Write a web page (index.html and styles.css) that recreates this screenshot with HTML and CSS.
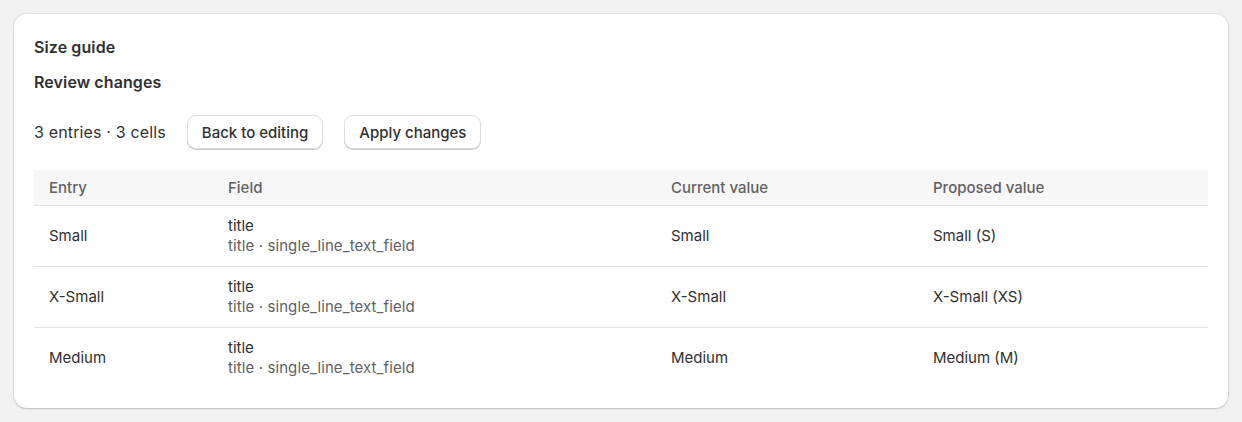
FILE: index.html
```html
<!DOCTYPE html>
<html lang="en">
<head>
    <meta charset="UTF-8">
    <meta name="viewport" content="width=device-width, initial-scale=1.0">
    <title>Size guide - Review changes</title>
    <link rel="stylesheet" href="styles.css">
</head>
<body>
    <div class="card">
        <h2 class="card-title">Size guide</h2>
        <h3 class="section-title">Review changes</h3>

        <div class="toolbar">
            <span class="summary">3 entries · 3 cells</span>
            <button class="btn">Back to editing</button>
            <button class="btn">Apply changes</button>
        </div>

        <table class="review-table">
            <colgroup>
                <col class="col-entry">
                <col class="col-field">
                <col class="col-current">
                <col>
            </colgroup>
            <thead>
                <tr>
                    <th>Entry</th>
                    <th>Field</th>
                    <th>Current value</th>
                    <th>Proposed value</th>
                </tr>
            </thead>
            <tbody>
                <tr>
                    <td>Small</td>
                    <td>
                        <div class="field-name">title</div>
                        <div class="field-meta">title · single_line_text_field</div>
                    </td>
                    <td>Small</td>
                    <td>Small (S)</td>
                </tr>
                <tr>
                    <td>X-Small</td>
                    <td>
                        <div class="field-name">title</div>
                        <div class="field-meta">title · single_line_text_field</div>
                    </td>
                    <td>X-Small</td>
                    <td>X-Small (XS)</td>
                </tr>
                <tr>
                    <td>Medium</td>
                    <td>
                        <div class="field-name">title</div>
                        <div class="field-meta">title · single_line_text_field</div>
                    </td>
                    <td>Medium</td>
                    <td>Medium (M)</td>
                </tr>
            </tbody>
        </table>
    </div>
</body>
</html>
```

FILE: styles.css
```css
body {
    margin: 0;
    padding: 14px;
    background: #f1f1f1;
    font-family: Inter, "Noto Sans", Arial, sans-serif;
    font-size: 15px;
    color: #303030;
}
.card {
    background: #fff;
    border-radius: 13px;
    padding: 20px;
    box-shadow: 0 0 0 1px rgba(0,0,0,0.05), 0 1px 2px rgba(0,0,0,0.18);
}
.card-title,
.section-title {
    margin: 0;
    font-size: 16px;
    font-weight: 600;
    line-height: 26px;
    letter-spacing: 0.1px;
}
.section-title {
    margin-top: 9px;
}
.toolbar {
    display: flex;
    align-items: center;
    gap: 21px;
    margin-top: 20px;
}
.summary {
    font-size: 16px;
    line-height: 20px;
    letter-spacing: 0.15px;
}
.btn {
    font-family: inherit;
    font-size: 15px;
    font-weight: 500;
    color: #303030;
    background: #fff;
    height: 34px;
    padding: 0 14px;
    border: 1px solid #dcdcdc;
    border-radius: 9px;
    box-shadow: 0 1px 0 #c8c8c8;
    cursor: pointer;
}
.review-table {
    width: 100%;
    margin-top: 21px;
    border-collapse: collapse;
    table-layout: fixed;
}
.col-entry { width: 179px; }
.col-field { width: 443px; }
.col-current { width: 262px; }
.review-table th {
    background: #f7f7f7;
    color: #616161;
    font-weight: 500;
    text-align: left;
    height: 35px;
    padding: 0 15px;
    border-bottom: 1px solid #e3e3e3;
}
.review-table td {
    height: 60px;
    padding: 0 15px;
    line-height: 20px;
    border-bottom: 1px solid #e3e3e3;
}
.review-table tbody tr:last-child td {
    border-bottom: none;
}
.field-meta {
    color: #616161;
    letter-spacing: 0.1px;
}
```
